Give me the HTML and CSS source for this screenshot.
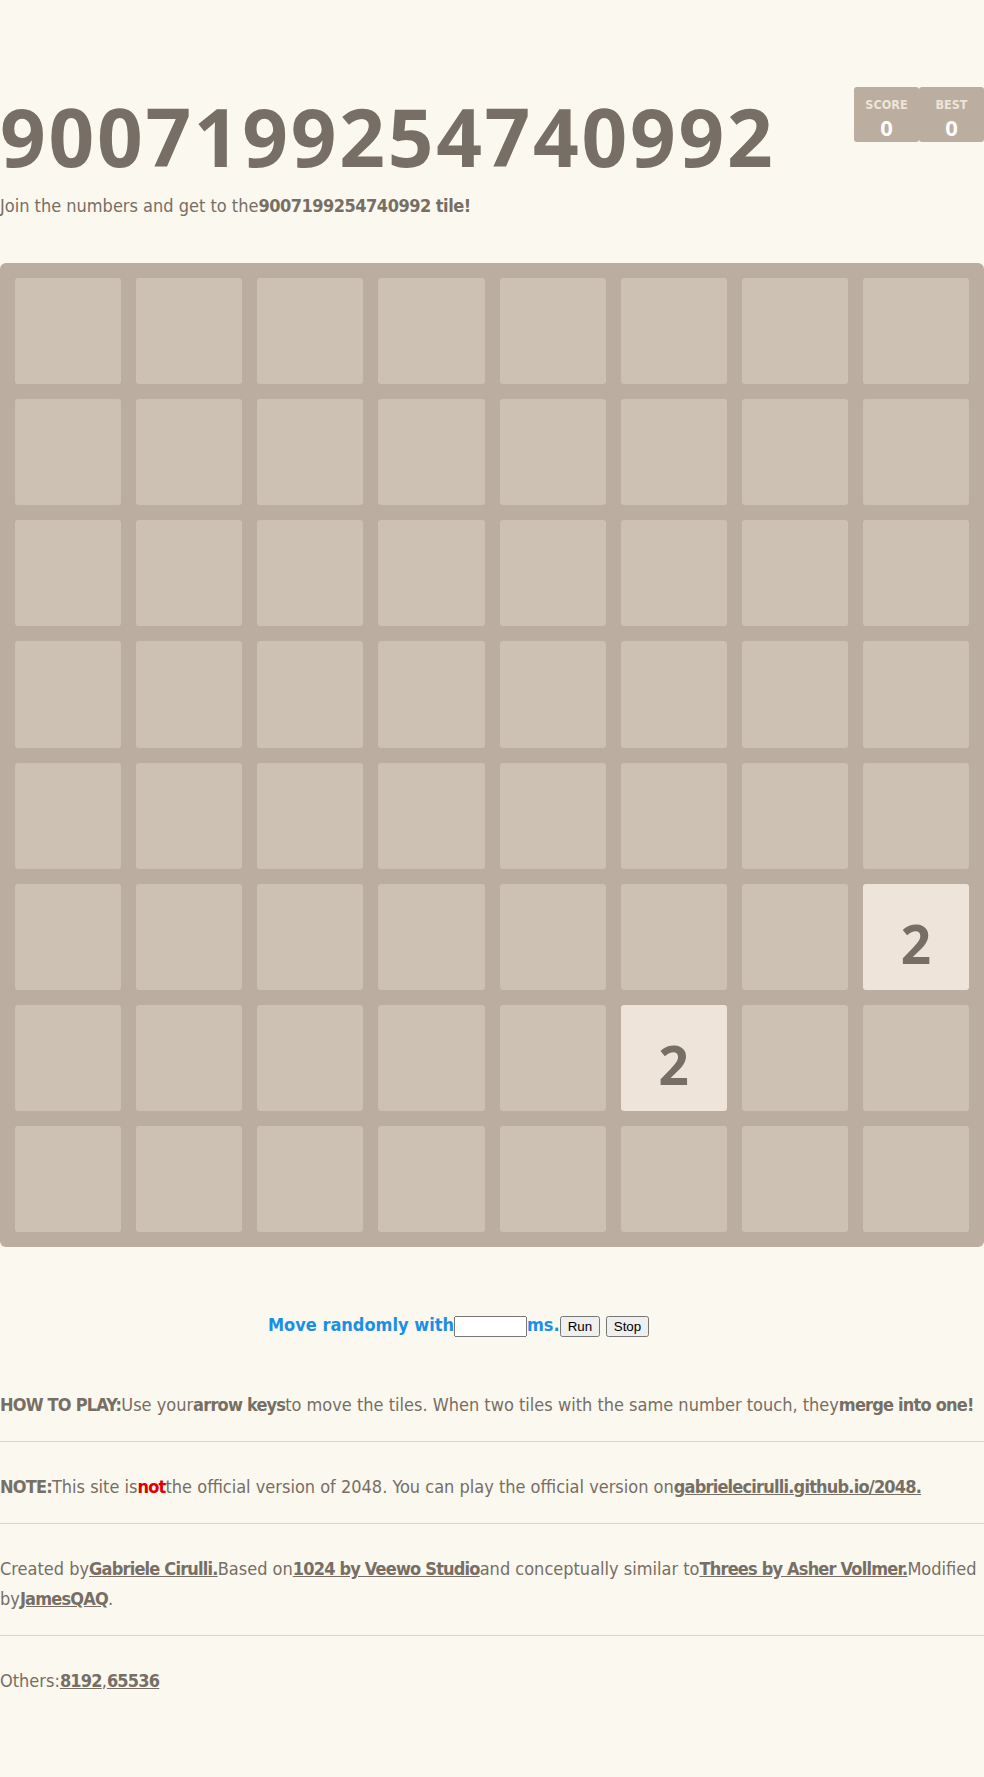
FILE: index.html
```html
<!DOCTYPE html>
<html lang="en">
<head>
<meta charset="utf-8">
<title>9007199254740992</title>
<link rel="stylesheet" href="styles.css">
</head>
<body>
<div class="container">
  <div class="heading">
    <h1 class="title">9007199254740992</h1>
    <div class="scores">
      <div class="score-box"><div class="score-label">Score</div><div class="score-value">0</div></div>
      <div class="score-box"><div class="score-label">Best</div><div class="score-value">0</div></div>
    </div>
  </div>
  <p class="intro">Join the numbers and get to the<strong class="b b-num">9007199254740992 tile!</strong></p>

  <div class="board">
    <div class="cell"></div><div class="cell"></div><div class="cell"></div><div class="cell"></div><div class="cell"></div><div class="cell"></div><div class="cell"></div><div class="cell"></div>
    <div class="cell"></div><div class="cell"></div><div class="cell"></div><div class="cell"></div><div class="cell"></div><div class="cell"></div><div class="cell"></div><div class="cell"></div>
    <div class="cell"></div><div class="cell"></div><div class="cell"></div><div class="cell"></div><div class="cell"></div><div class="cell"></div><div class="cell"></div><div class="cell"></div>
    <div class="cell"></div><div class="cell"></div><div class="cell"></div><div class="cell"></div><div class="cell"></div><div class="cell"></div><div class="cell"></div><div class="cell"></div>
    <div class="cell"></div><div class="cell"></div><div class="cell"></div><div class="cell"></div><div class="cell"></div><div class="cell"></div><div class="cell"></div><div class="cell"></div>
    <div class="cell"></div><div class="cell"></div><div class="cell"></div><div class="cell"></div><div class="cell"></div><div class="cell"></div><div class="cell"></div><div class="cell tile-2">2</div>
    <div class="cell"></div><div class="cell"></div><div class="cell"></div><div class="cell"></div><div class="cell"></div><div class="cell tile-2">2</div><div class="cell"></div><div class="cell"></div>
    <div class="cell"></div><div class="cell"></div><div class="cell"></div><div class="cell"></div><div class="cell"></div><div class="cell"></div><div class="cell"></div><div class="cell"></div>
  </div>

  <div class="auto">Move randomly with<input type="text" class="ms-input">ms.<button class="btn">Run</button> <button class="btn">Stop</button></div>

  <p class="text"><strong class="b">HOW TO PLAY:</strong>Use your<strong class="b">arrow keys</strong>to move the tiles. When two tiles with the same number touch, they<strong class="b">merge into one!</strong></p>
  <hr class="rule">
  <p class="text"><strong class="b">NOTE:</strong>This site is<strong class="b red">not</strong>the official version of 2048. You can play the official version on<a class="link" href="#">gabrielecirulli.github.io/2048.</a></p>
  <hr class="rule">
  <p class="text">Created by<a class="link" href="#">Gabriele Cirulli.</a>Based on<a class="link" href="#">1024 by Veewo Studio</a>and conceptually similar to<a class="link" href="#">Threes by Asher Vollmer.</a>Modified by<a class="link" href="#">JamesQAQ</a>.</p>
  <hr class="rule">
  <p class="text">Others:<a class="link" href="#">8192</a>,<a class="link" href="#">65536</a></p>
</div>
</body>
</html>
```
FILE: styles.css
```css
html, body {
  margin: 0;
  padding: 0;
  background: #faf8ef;
  color: #776e65;
  font-family: "DejaVu Sans Condensed", "DejaVu Sans", sans-serif;
  font-size: 18px;
}

.container {
  width: 984px;
  padding-top: 80px;
  padding-bottom: 60px;
}

.heading {
  display: flex;
  justify-content: space-between;
  align-items: flex-start;
}

.title {
  margin: 0;
  font-family: "Noto Sans", sans-serif;
  font-size: 80px;
  font-weight: bold;
  line-height: 111px;
  letter-spacing: 2.7px;
  color: #776e65;
}

.scores {
  display: flex;
  margin-top: 7px;
}

.score-box {
  width: 65px;
  height: 55px;
  box-sizing: border-box;
  padding-top: 10px;
  background: #bbada0;
  border-radius: 3px;
  text-align: center;
}

.score-label {
  font-size: 12.5px;
  line-height: 16px;
  font-weight: bold;
  text-transform: uppercase;
  color: #eee4da;
}

.score-value {
  margin-top: 3px;
  font-family: "Noto Sans", sans-serif;
  font-size: 22px;
  line-height: 22px;
  font-weight: bold;
  color: #ffffff;
}

.intro {
  margin: 0;
  line-height: 30px;
}

.b {
  font-weight: bold;
  letter-spacing: -0.8px;
}

.b-num {
  letter-spacing: -0.5px;
}

.board {
  margin-top: 42px;
  width: 984px;
  height: 984px;
  box-sizing: border-box;
  padding: 15px;
  background: #bbada0;
  border-radius: 6px;
  display: grid;
  grid-template-columns: repeat(8, 1fr);
  grid-template-rows: repeat(8, 1fr);
  gap: 15px;
}

.cell {
  background: #cdc1b4;
  border-radius: 3px;
}

.tile-2 {
  background: #eee4da;
  color: #776e65;
  font-family: "Noto Sans", sans-serif;
  font-weight: bold;
  font-size: 53px;
  line-height: 53px;
  display: flex;
  align-items: center;
  justify-content: center;
  padding-top: 14px;
  box-sizing: border-box;
}

.auto {
  margin-top: 63px;
  padding-left: 268px;
  line-height: 30px;
  font-weight: bold;
  color: #1a8fe6;
}

.ms-input {
  width: 73px;
  box-sizing: border-box;
  font-family: "Liberation Sans", sans-serif;
  font-size: 13.33px;
}

.btn {
  font-family: "Liberation Sans", sans-serif;
  font-size: 13.33px;
}

.auto + .text {
  margin-top: 50px;
}

.text {
  margin: 0;
  line-height: 30px;
}

.rule {
  border: none;
  border-top: 1px solid #d8d4d0;
  margin: 21px 0 30px;
  height: 0;
}

.link {
  color: #776e65;
  font-weight: bold;
  letter-spacing: -0.8px;
  text-decoration: underline;
}

.red {
  color: #e00000;
}
```
